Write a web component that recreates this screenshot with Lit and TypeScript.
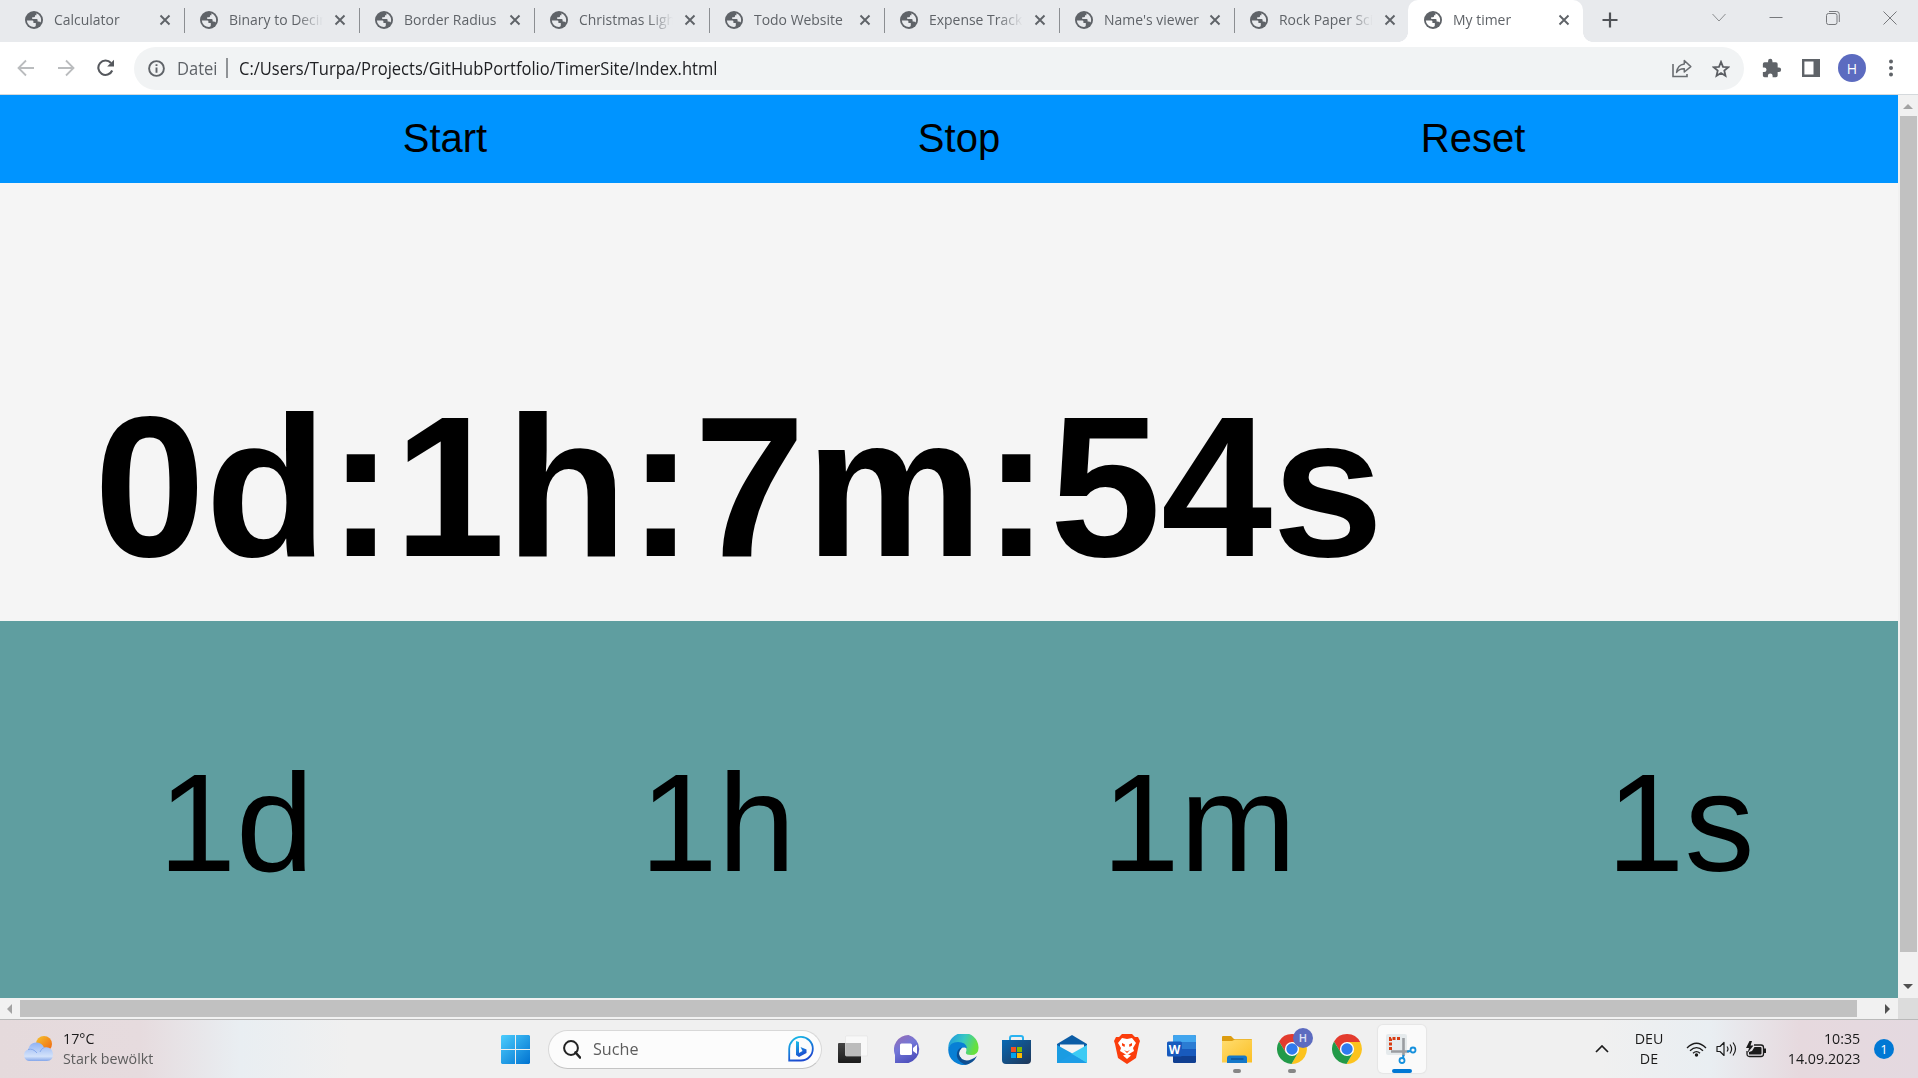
import { LitElement, html, css, svg } from "lit";
import { customElement } from "lit/decorators.js";

const tabs = ["Calculator", "Binary to Decimal", "Border Radius", "Christmas Lights", "Todo Website", "Expense Tracker", "Name's viewer", "Rock Paper Scissors", "My timer"];

const icon = (w: number, h: number, body: unknown, vb = `0 0 ${w} ${h}`) =>
  html`<svg width=${w} height=${h} viewBox=${vb} fill="none">${body}</svg>`;

const globe = icon(18, 18, svg`<circle cx="9" cy="9" r="9" fill="#5f6368"/><path class="land" d="M1.8 9.6H7.4Q8.4 9.6 8.4 10.6V12H10.8V14.6Q10.8 15.6 9 16.1A7.1 7.1 0 0 1 1.8 9.6Z"/><path class="land" d="M11.4 2.3A7.1 7.1 0 0 1 15.6 11.6Q14.9 10.6 13.5 10.6H12.6V9Q12.6 8 11.6 8H7.2V6.3H9Q10 6.3 10 5.3V4.2H11.4Z"/>`);
const close = icon(12, 12, svg`<path d="M1.5 1.5 10.5 10.5M10.5 1.5 1.5 10.5" stroke="#5f6368" stroke-width="1.9"/>`);

const chrome = svg`<path d="M15 8H28.2A15 15 0 0 0 2 7.5L9 19Z" fill="#e33b2e"/><path d="M21.2 18.5 14.5 30A15 15 0 0 0 28.2 8H15Z" fill="#fcc31e"/><path d="M8.8 18.6 2 7.5A15 15 0 0 0 14.5 30L21.2 18.5Z" fill="#229a48"/><circle cx="15" cy="15" r="7.1" fill="#fff"/><circle cx="15" cy="15" r="5.7" fill="#2f7bee"/>`;

@customElement("app-root")
export class AppRoot extends LitElement {
  static styles = css`
    :host { display: flex; flex-direction: column; width: 1918px; height: 1078px; overflow: hidden; font-family: "Open Sans", "Noto Sans", sans-serif; }
    * { box-sizing: border-box; }
    svg { display: block; flex: none; }
    .tabs { height: 42px; background: #e8eaed; display: flex; padding-left: 9px; flex: none; }
    .tab { width: 175px; height: 42px; padding: 0 13px 2px 16px; display: flex; align-items: center; position: relative; font: 15px "Open Sans", "Noto Sans", sans-serif; color: #5f6368; flex: none; }
    .tab::after { content: ""; position: absolute; right: -1px; top: 8px; width: 1px; height: 25px; background: #8b8e92; }
    .tab.nosep::after { display: none; }
    .land { fill: #e8eaed; }
    .active .land { fill: #fff; }
    .title { width: 95px; height: 22px; line-height: 20px; margin: 0 10px 0 11px; overflow: hidden; white-space: nowrap; flex: none; }
    .title span { display: inline-block; transform-origin: left center; transform: scaleX(.93); }
    .title.cut { -webkit-mask-image: linear-gradient(90deg, #000 72%, transparent 99%); mask-image: linear-gradient(90deg, #000 72%, transparent 99%); }
    .tab.active { background: #fff; border-radius: 10px 10px 0 0; margin-left: -1px; padding-left: 16px; padding-right: 14px; }
    .tab.active::before { content: ""; position: absolute; left: -10px; right: -10px; bottom: 0; height: 10px; background: radial-gradient(circle at 0 0, transparent 9.6px, #fff 10.2px) left / 10px 10px no-repeat, radial-gradient(circle at 100% 0, transparent 9.6px, #fff 10.2px) right / 10px 10px no-repeat; }
    .plus { margin: 12px 0 0 19px; }
    .win { margin-left: auto; display: flex; gap: 43px; align-items: center; height: 35px; padding-right: 21px; }
    .toolbar { height: 53px; background: #fff; border-bottom: 1px solid #d5d9dc; display: flex; align-items: center; flex: none; padding: 0 20px 0 17px; }
    .back, .fwd { margin-right: 22px; }
    .omni { margin-left: 19px; width: 1610px; height: 43px; border-radius: 22px; background: #f1f3f4; display: flex; align-items: center; padding: 0 14px; font: 18px "Open Sans", "Noto Sans", sans-serif; color: #202124; margin-top: 1px; }
    .datei { color: #5f6368; margin-left: 12px; width: 40px; }
    .bar { width: 1.5px; height: 20px; background: #909396; margin: 0 11px 2px 9px; }
    .url, .datei { white-space: nowrap; transform-origin: left center; transform: scaleX(.918); margin-bottom: 2px; }
    .share { margin-left: auto; margin-right: 20px; }
    .ext { margin-left: 18px; } .side { margin-left: 20px; }
    .avatar { margin-left: 18px; width: 28px; height: 28px; border-radius: 50%; background: #5c6bc0; color: #fff; font: 14px "Open Sans", sans-serif; display: grid; place-items: center; }
    .dots { margin-left: 23px; }
    .mid { display: flex; height: 903px; flex: none; }
    .page { width: 1898px; display: flex; flex-direction: column; font-family: "Liberation Sans", Arial, sans-serif; color: #000; }
    .nav { height: 88px; background: #0094ff; display: grid; grid-template-columns: repeat(3, 514px); padding-left: 188px; font-size: 40px; text-align: center; align-items: center; padding-bottom: 2px; flex: none; }
    .clock { height: 438px; background: #f5f5f5; padding: 192px 0 0 94px; font-size: 200px; line-height: 224px; font-weight: bold; white-space: nowrap; flex: none; }
    .add { flex: 1; background: #5f9ea0; display: grid; grid-template-columns: 472px repeat(3, 481.4px); padding-top: 122px; font-size: 140px; line-height: 160px; text-align: center; overflow: hidden; }
    .add span:not(:first-child) { margin-left: 5px; margin-right: -5px; }
    .add { margin-left: 0; }
    .vs { width: 20px; background: #f1f1f1; display: flex; flex-direction: column; align-items: center; padding-top: 9px; }
    .vthumb { width: 17px; height: 836px; background: #c1c1c1; margin: 7px 0 32px; flex: none; }
    .hs { height: 21px; background: #f1f1f1; display: flex; align-items: center; flex: none; padding-left: 7px; }
    .hthumb { width: 1837px; height: 17px; background: #c1c1c1; margin-left: 8px; margin-right: 28px; }
    .corner { width: 20px; height: 21px; background: #dcdcdc; margin-left: auto; }
    .task { height: 59px; border-top: 1px solid #b9b9b9; background: linear-gradient(90deg, #e5dadc 0, #e6dbde 140px, #e9eef2 240px, #f0f0f0 350px, #f0f0f0 1600px, #e9eef2 1710px, #e6d9de 1800px, #e4d9e0 100%); display: flex; flex: none; align-items: center; color: #1b1b1b; font-size: 15px; line-height: 20px; font-family: "Open Sans", "Noto Sans", sans-serif; }
    .weather { display: flex; width: 499px; padding-left: 23px; gap: 9px; align-items: center; }
    .weather > div, .lang, .date { padding-bottom: 2px; }
    .sx { transform: scaleX(.95); transform-origin: left center; white-space: nowrap; }
    .grey { color: #5d5d5d; }
    .start { margin-left: 2px; }
    .search { width: 274px; height: 39px; border-radius: 20px; background: #fcfcfc; border: 1px solid #d8d8d8; border-bottom-color: #c4c4c4; margin-left: 18px; margin-right: 2px; display: flex; align-items: center; padding: 0 7px 0 14px; font-size: 17px; flex: none; }
    .search .sx { margin-left: 12px; margin-right: auto; color: #5d5d5d; }
    .apps { display: flex; align-items: center; }
    .app { width: 55px; height: 58px; display: grid; place-items: center; position: relative; }
    .app.nudge { padding-left: 3px; }
    .app.badged { padding: 0 0 6px 6px; }
    .app.run::after { content: ""; position: absolute; left: 24px; bottom: 5px; width: 8px; height: 4px; border-radius: 2px; background: #868686; }
    .app.on::before { content: ""; position: absolute; left: 4px; top: 5px; width: 48px; height: 48px; border-radius: 5px; background: #fafafa; box-shadow: 0 0 1px 1px #e5e5e5; }
    .app.on::after { content: ""; position: absolute; left: 18px; bottom: 5px; width: 20px; height: 4px; border-radius: 2px; background: #0078d4; }
    .app svg { position: relative; }
    .tray { margin-left: auto; display: flex; align-items: center; padding-right: 24px; }
    .lang { text-align: center; width: 30px; margin: 0 22px 0 25px; }
    .icons { display: flex; gap: 9px; align-items: center; }
    .date { width: 76px; margin-left: 17px; display: flex; flex-direction: column; align-items: flex-end; }
    .date .sx { transform-origin: right center; }
    .lang .sx { transform-origin: center; }
    .badge { width: 20px; height: 20px; border-radius: 50%; background: #0078d4; color: #fff; font-size: 13px; display: grid; place-items: center; margin-left: 14px; }
  `;

  render() {
    return html`
      <div class="tabs">
        ${tabs.map((t, i) => html`<div class="tab ${i === 8 ? "active nosep" : i === 7 ? "nosep" : ""}">${globe}<div class="title ${[1, 3, 5, 7].includes(i) ? "cut" : ""}"><span>${t}</span></div>${close}</div>`)}
        <div class="plus">${icon(16, 16, svg`<path d="M8 .5V15.5M.5 8H15.5" stroke="#505357" stroke-width="2.2"/>`)}</div>
        <div class="win">
          ${icon(14, 9, svg`<path d="M.5 1 7 8 13.5 1" stroke="#8b8d90"/>`)}
          ${icon(14, 14, svg`<path d="M.5 6.500H13.5" stroke="#77797c"/>`)}
          ${icon(14, 14, svg`<rect x=".5" y="2.5" width="10.5" height="11" rx="2" stroke="#77797c"/><path d="M3 .5H10.5A2.8 2.8 0 0 1 13.3 3.3V11" stroke="#77797c"/>`)}
          ${icon(14, 14, svg`<path d="M.5 .5 13.5 13.5M13.5 .5 .5 13.5" stroke="#77797c"/>`)}
        </div>
      </div>
      <div class="toolbar">
        <div class="back">${icon(18, 18, svg`<path d="M17 9H2M9 1.5 1.5 9 9 16.5" stroke="#babcbe" stroke-width="1.8"/>`)}</div>
        <div class="fwd">${icon(18, 18, svg`<path d="M1 9H16M9 1.5 16.5 9 9 16.5" stroke="#babcbe" stroke-width="1.8"/>`)}</div>
        ${icon(18, 18, svg`<path d="M15.2 11.5A7.2 7.2 0 1 1 14 4" stroke="#55585d" stroke-width="2.1"/><path d="M17 .8V7.6H10.2Z" fill="#55585d"/>`)}
        <div class="omni">
          ${icon(17, 17, svg`<circle cx="8.5" cy="8.5" r="7.4" stroke="#5f6368" stroke-width="1.9"/><path d="M8.5 7.5V12.8M8.5 4.2V6" stroke="#5f6368" stroke-width="1.9"/>`)}
          <span class="datei">Datei</span><span class="bar"></span><span class="url">C:/Users/Turpa/Projects/GitHubPortfolio/TimerSite/Index.html</span>
          <div class="share">${icon(20, 19, svg`<path d="M1 5V17.5H15V15" stroke="#696c70" stroke-width="1.6"/><path d="M12.3 1.5 18.8 7.6 12.3 13V9.8Q7.5 9.5 4.6 13.4 5.5 5.7 12.3 4.9Z" stroke="#696c70" stroke-width="1.5" stroke-linejoin="round"/>`)}</div>
          ${icon(18, 18, svg`<path d="M9 1.9 11 6.8 16.3 7.2 12.3 10.6 13.5 15.8 9 13 4.5 15.8 5.7 10.6 1.7 7.2 7 6.8Z" stroke="#5b5e63" stroke-width="1.8"/>`)}
        </div>
        <div class="ext">${icon(20, 20, svg`<path d="M20.5 11H19V7a2 2 0 0 0-2-2h-4V3.500a2.500 2.500 0 0 0-5 0V5H4a2 2 0 0 0-2 2v3.800h1.500a2.700 2.700 0 0 1 0 5.400H2V20a2 2 0 0 0 2 2h3.800v-1.500a2.700 2.700 0 0 1 5.400 0V22H17a2 2 0 0 0 2-2v-4h1.500a2.500 2.500 0 0 0 0-5Z" fill="#5f6368"/>`, "1 0 23 23")}</div>
        <div class="side">${icon(18, 18, svg`<path d="M1.200 1.200H16.800V16.800H1.200Z" stroke="#5f6368" stroke-width="2.400"/><path d="M11.500 1H17V17H11.500Z" fill="#5f6368"/>`)}</div>
        <div class="avatar">H</div>
        <div class="dots">${icon(4, 18, svg`<circle cx="2" cy="2.500" r="2" fill="#5f6368"/><circle cx="2" cy="9" r="2" fill="#5f6368"/><circle cx="2" cy="15.500" r="2" fill="#5f6368"/>`)}</div>
      </div>
      <div class="mid">
        <div class="page">
          <div class="nav"><span>Start</span><span>Stop</span><span>Reset</span></div>
          <div class="clock">0d:1h:7m:54s</div>
          <div class="add"><span>1d</span><span>1h</span><span>1m</span><span>1s</span></div>
        </div>
        <div class="vs">${icon(10, 5, svg`<path d="M5 0 10 5H0Z" fill="#a3a3a3"/>`)}<div class="vthumb"></div>${icon(10, 5, svg`<path d="M0 0H10L5 5Z" fill="#505050"/>`)}</div>
      </div>
      <div class="hs">${icon(5, 10, svg`<path d="M5 0V10L0 5Z" fill="#a3a3a3"/>`)}<div class="hthumb"></div>${icon(5, 10, svg`<path d="M0 0V10L5 5Z" fill="#505050"/>`)}<div class="corner"></div></div>
      <div class="task">
        <div class="weather">
          ${icon(31, 26, svg`<defs><linearGradient id="sun" x1="0" y1="0" x2="1" y2="1"><stop stop-color="#f5c32c"/><stop offset="1" stop-color="#f0610f"/></linearGradient><linearGradient id="cl" x1="0" y1="0" x2="0" y2="1"><stop stop-color="#8fb2f3"/><stop offset=".75" stop-color="#d3e2fa"/><stop offset="1" stop-color="#84a6ea"/></linearGradient></defs><circle cx="21" cy="8" r="8" fill="url(#sun)"/><path d="M6 25A6 6 0 0 1 5 13.500Q7 6 14 6.500 19 7 21 11.500 29 10 30 18 30 25 24 25Z" fill="url(#cl)"/><path d="M5 13.500Q10 12 14 17M21 11.500Q18 13 17 16" stroke="#86a9ec"/>`)}
          <div><div class="sx">17°C</div><div class="sx grey">Stark bewölkt</div></div>
        </div>
        <div class="apps start">${icon(29, 29, svg`<defs><linearGradient id="win" x1="0" y1="0" x2="1" y2="1"><stop stop-color="#4ccdfd"/><stop offset="1" stop-color="#0072d0"/></linearGradient></defs><path d="M1 0H14V14H0V1ZM15 0H28L29 1V14H15ZM0 15H14V29H1L0 28ZM15 15H29V28L28 29H15Z" fill="url(#win)"/>`)}</div>
        <div class="search">
          ${icon(18, 19, svg`<circle cx="8" cy="8" r="6.900" stroke="#222" stroke-width="2"/><path d="M12.500 12.500 17 17.500" stroke="#222" stroke-width="2.600" stroke-linecap="round"/>`)}
          <span class="sx">Suche</span>
          ${icon(26, 26, svg`<defs><linearGradient id="bing" x1="0" y1="0" x2=".4" y2="1"><stop stop-color="#16c2e8"/><stop offset="1" stop-color="#1b4ad0"/></linearGradient></defs><path d="M1.200 24.500V13A11.800 11.800 0 1 1 13 24.500Z" stroke="url(#bing)" stroke-width="1.800"/><path d="M8 5 11 6V17L14.500 15 12.500 11 18.500 13.500V17L11 21 8 19Z" fill="url(#bing)"/>`)}
        </div>
        <div class="apps">
          <div class="app nudge">${icon(30, 29, svg`<defs><linearGradient id="tv" x1="0" y1="0" x2="0" y2="1"><stop stop-color="#444"/><stop offset="1" stop-color="#1b1b1b"/></linearGradient></defs><rect y="8" width="23" height="20" rx="1" fill="url(#tv)"/><rect x="7.500" y="1" width="22" height="20" rx="1" fill="#f8f8f8" stroke="#e2e2e2" stroke-width=".6"/><path d="M8 8H23V21H8Z" fill="#bcbcbc"/>`)}</div>
          <div class="app nudge">${icon(29, 29, svg`<defs><linearGradient id="meet" x1="0" y1="0" x2=".5" y2="1"><stop stop-color="#9a6bb0"/><stop offset=".5" stop-color="#7377d8"/><stop offset="1" stop-color="#5052be"/></linearGradient></defs><path d="M14.500 0A14.500 14.500 0 0 1 14.500 28H1V20A14.500 14.500 0 0 1 14.500 0Z" fill="url(#meet)"/><rect x="6" y="8.500" width="12" height="11.500" rx="1.500" fill="#fff"/><path d="M19 13 23 9.500V19L19 16Z" fill="#fff"/>`)}</div>
          <div class="app nudge">${icon(31, 31, svg`<defs><linearGradient id="ed" x1="0" y1="0" x2="1" y2=".3"><stop offset=".1" stop-color="#209cde"/><stop offset=".55" stop-color="#37c7c3"/><stop offset="1" stop-color="#66e03e"/></linearGradient></defs><path d="M.300 15A15 15 0 0 1 30.500 13Q31 21 23 21 17 21 18 18 20 13 13 10 4 7 .300 15Z" fill="url(#ed)"/><path d="M.300 15Q2 8 10 8 18 8 19 14 12 12 11 19 11 26 20 30.200A15 15 0 0 1 .300 15Z" fill="#087fd5"/><path d="M14 13.500Q8 20 14 25 20 29 29 22 25 30 17 30.700 7 26 9 19 10 14 14 13.500Z" fill="#0e4e91"/>`)}</div>
          <div class="app">${icon(29, 29, svg`<defs><linearGradient id="st" x1="0" y1="0" x2="1" y2="1"><stop stop-color="#0869b4"/><stop offset="1" stop-color="#203657"/></linearGradient></defs><path d="M8 7V3Q8 1 10 1H19Q21 1 21 3V7" stroke="#29b3f1" stroke-width="2"/><path d="M0 5H29V25Q29 29 25 29H4Q0 29 0 25Z" fill="url(#st)"/><path d="M9 12H14V17H9Z" fill="#f25022"/><path d="M15 12H20V17H15Z" fill="#7fba00"/><path d="M9 18H14V23H9Z" fill="#00a4ef"/><path d="M15 18H20V23H15Z" fill="#ffb900"/>`)}</div>
          <div class="app">${icon(30, 28, svg`<path d="M0 9 15 0 30 9V14H0Z" fill="#0b5ca5"/><path d="M3 9.500H27V20H3Z" fill="#f4f4f4"/><path d="M0 10 18 20 30 28H0Z" fill="#1a9ce2"/><path d="M30 10V28L14 19Z" fill="#3ccbf4"/><path d="M0 28 15 19 30 28Z" fill="#1d9de6"/>`)}</div>
          <div class="app">${icon(26, 30, svg`<path d="M8 0H18L21 3 24 3 26 7 25 10 22 24 13 30 4 24 1 10 0 7 2 3H5Z" fill="#fb3d0c"/><path d="M13 5 18 4 22 9 19 14 20 17 15 20 13 21 11 20 6 17 7 14 4 9 8 4Z" fill="#fff"/><path d="M8 9 11 10.500 10.500 13 8 11.500M18 9 15 10.500 15.500 13 18 11.500M10 16 13 17.500 16 16 13 19Z" fill="#fb3d0c"/><path d="M9 21.500 13 20 17 21.500 13 25Z" fill="#fff"/>`)}</div>
          <div class="app">${icon(29, 28, svg`<rect x="6" width="23" height="28" rx="1.500" fill="#103f91"/><path d="M6 1.500Q6 0 7.500 0H27.500Q29 0 29 1.500V7H6Z" fill="#41a5ee"/><path d="M6 7H29V14H6Z" fill="#2b7cd3"/><path d="M6 14H29V21H6Z" fill="#185abd"/><rect y="6.500" width="15" height="15" rx="1.500" fill="#185abd"/><text x="7.500" y="18.500" text-anchor="middle" font-family="Open Sans, sans-serif" font-weight="bold" font-size="12" fill="#fff">W</text>`)}</div>
          <div class="app run">${icon(30, 27, svg`<defs><linearGradient id="fo" x1="0" y1="0" x2="1" y2="1"><stop stop-color="#ffdd70"/><stop offset="1" stop-color="#fbbf24"/></linearGradient></defs><path d="M0 1Q0 0 1 0H9L12 3H29Q30 3 30 4V8H0Z" fill="#dc9c10"/><path d="M0 5H10L13 3.500H30V26.500H0Z" fill="url(#fo)"/><path d="M5 27V22Q5 19.500 7.500 19.500H22.500Q25 19.500 25 22V27Z" fill="#1478c9"/><path d="M9 23H21.500" stroke="#0b4e91" stroke-width="1.300"/>`)}</div>
          <div class="app run badged">${icon(36, 36, svg`<g transform="translate(0 6)">${chrome}</g><circle cx="26" cy="10" r="10" fill="#5c6bc0"/><text x="26" y="14" text-anchor="middle" font-family="Open Sans, sans-serif" font-size="11" font-weight="600" fill="#dfe2f5">H</text>`)}</div>
          <div class="app">${icon(30, 30, chrome)}</div>
          <div class="app on">${icon(31, 30, svg`<rect width="21" height="21" rx="2" fill="#e5eaec"/><path d="M14 4.500H4.500V16" stroke="#d83b11" stroke-width="3" stroke-dasharray="3 1.500"/><path d="M17.500 4V22M5 17.500H23" stroke="#9a9da1" stroke-width="2.600"/><path d="M21 17.500 25 17M17.500 21 17 24" stroke="#1590dd" stroke-width="2"/><circle cx="27" cy="16" r="2.500" stroke="#1590dd" stroke-width="1.800"/><circle cx="16" cy="26.500" r="2.500" stroke="#1590dd" stroke-width="1.800"/>`)}</div>
        </div>
        <div class="tray">
          ${icon(14, 8, svg`<path d="M1 7 7 1 13 7" stroke="#1b1b1b" stroke-width="1.700"/>`)}
          <div class="lang"><div class="sx">DEU</div><div class="sx">DE</div></div>
          <div class="icons">
            ${icon(21, 15, svg`<path d="M1 6Q10.500-3.500 20 6M4 8.800Q10.500 2.500 17 8.800M7 11.200Q10.500 8 14 11.200" stroke="#1b1b1b" stroke-width="1.300"/><circle cx="10.500" cy="13" r="1.700" fill="#1b1b1b"/>`)}
            ${icon(21, 16, svg`<path d="M1 5.500H4L8 1.500V14.500L4 10.500H1Z" stroke="#1b1b1b" stroke-width="1.200" stroke-linejoin="round"/><path d="M11 5.500Q13 8 11 10.500M14 3.500Q17.200 8 14 12.500M17 1.500Q22 8 17 14.500" stroke="#1b1b1b" stroke-width="1.200"/>`)}
            ${icon(21, 17, svg`<path d="M8 4H15Q17.500 4 17.500 6.500V13Q17.500 15.500 15 15.500H3.500Q1 15.500 1 13V10" stroke="#1b1b1b" stroke-width="1.300"/><path d="M8.500 6H14.500Q15.500 6 15.500 7V12.500Q15.500 13.500 14.500 13.500H3V11L6 10Z" fill="#1b1b1b"/><path d="M18 7.500H20V12H18ZM3.500 0 0 7H3L1.500 12 7.500 4.500H4.500L6 0Z" fill="#1b1b1b"/>`)}
          </div>
          <div class="date"><div class="sx">10:35</div><div class="sx">14.09.2023</div></div>
          <div class="badge">1</div>
        </div>
      </div>
    `;
  }
}
